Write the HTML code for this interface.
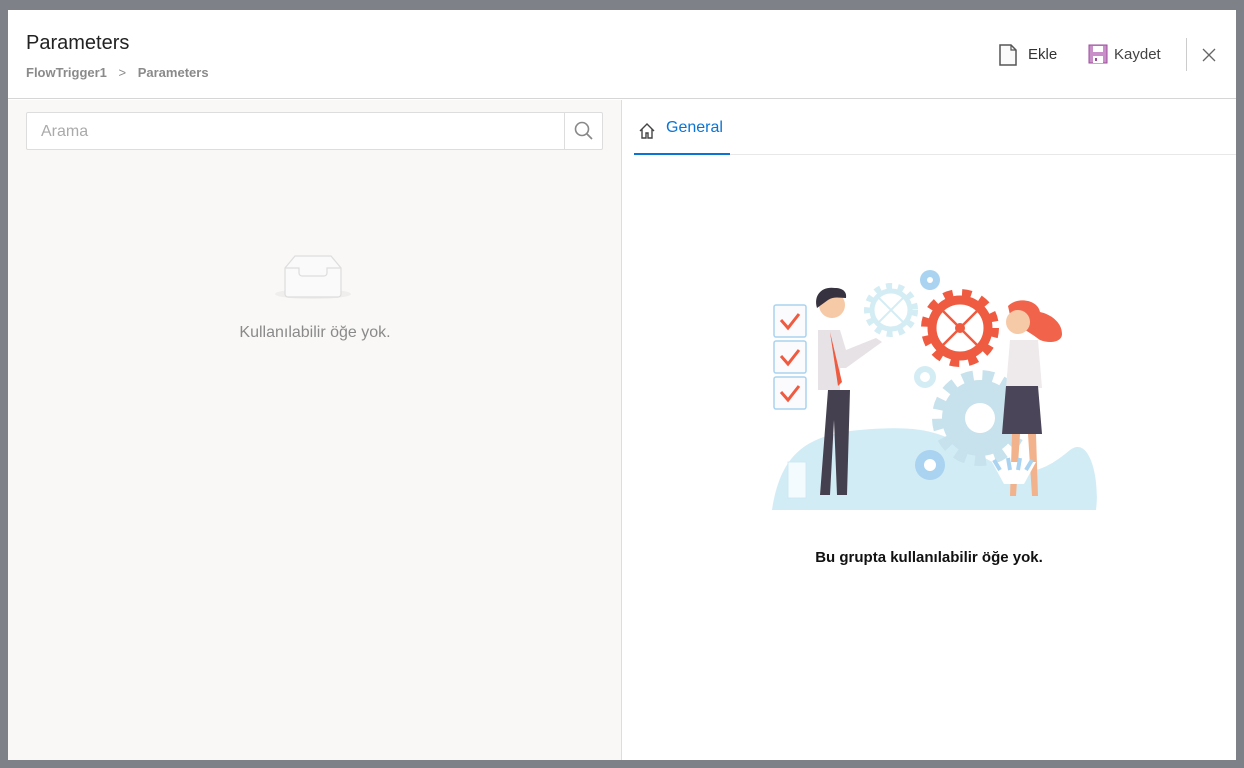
<!DOCTYPE html>
<html><head><meta charset="utf-8"><style>
*{box-sizing:border-box;margin:0;padding:0}
body{width:1244px;height:768px;background:#7e8288;font-family:"Liberation Sans",sans-serif;position:relative;overflow:hidden}
.modal{position:absolute;left:8px;top:10px;width:1228px;height:750px;background:#fff}
.hdr{position:absolute;left:0;top:0;width:1228px;height:89px;border-bottom:1px solid #d6d6d6}
.title{position:absolute;left:18px;top:22px;font-size:20px;color:#222}
.bc{position:absolute;left:18px;top:55px;font-size:13px;color:#8a8a8a;font-weight:bold}
.left{position:absolute;left:0;top:90px;width:614px;height:660px;background:#f9f8f6;border-right:1px solid #ddd}
.search{position:absolute;left:18px;top:12px;width:577px;height:38px;border:1px solid #ddd;background:#fff;border-radius:2px}
.search span{position:absolute;left:14px;top:10px;font-size:16px;color:#aaa}
.sbtn{position:absolute;right:0;top:0;width:38px;height:36px;border-left:1px solid #ddd}
.empty{position:absolute;left:0;width:614px;text-align:center;font-size:16px;color:#8a8a8a}
.tab{position:absolute;left:626px;top:100px;width:96px;height:45px}
.tabline{position:absolute;left:626px;top:144px;width:602px;height:1px;background:#e8e8e8}
.msg{position:absolute;left:614px;width:614px;top:539px;text-align:center;font-size:15px;font-weight:bold;color:#111}
</style></head><body>
<div class="modal">
 <div class="hdr">
  <div class="title">Parameters</div>
  <div class="bc">FlowTrigger1 <span style="font-weight:normal;margin:0 8px">&gt;</span> Parameters</div>
  <svg style="position:absolute;left:990px;top:34px" width="20" height="22"><path d="M2 1h11l5 5v15H2z" fill="#fafafa" stroke="#555" stroke-width="1.5"/><path d="M13 1v5h5" fill="none" stroke="#555" stroke-width="1.2"/></svg>
  <div style="position:absolute;left:1020px;top:36px;font-size:15px;color:#333">Ekle</div>
  <svg style="position:absolute;left:1080px;top:34px" width="20" height="20"><rect x="1" y="1" width="18" height="18" fill="#c98fc8" stroke="#9a4d98"/><rect x="5" y="2" width="10" height="6" fill="#fff"/><rect x="5" y="12" width="10" height="7" fill="#fff"/><rect x="7" y="14" width="2" height="3" fill="#9a4d98"/></svg>
  <div style="position:absolute;left:1106px;top:36px;font-size:15px;color:#444">Kaydet</div>
  <div style="position:absolute;left:1178px;top:28px;width:1px;height:33px;background:#ccc"></div>
  <svg style="position:absolute;left:1194px;top:38px" width="14" height="14"><path d="M1 1L13 13M13 1L1 13" stroke="#666" stroke-width="1.3"/></svg>
 </div>
 <div class="left">
  <div class="search"><span>Arama</span><div class="sbtn"><svg width="38" height="36"><circle cx="17" cy="16" r="6.5" fill="none" stroke="#888" stroke-width="1.6"/><path d="M22 21l5 5" stroke="#888" stroke-width="1.7"/></svg></div></div>
  <svg style="position:absolute;left:265px;top:152px" width="80" height="48"><ellipse cx="40" cy="42" rx="38" ry="5" fill="#f0eeec"/><path d="M12 16L22 4h36l10 12v26a3 3 0 0 1-3 3H15a3 3 0 0 1-3-3z" fill="#fafafa" stroke="#ddd" stroke-width="1.2"/><path d="M12 16h14v5a3 3 0 0 0 3 3h22a3 3 0 0 0 3-3v-5h14" fill="none" stroke="#ddd" stroke-width="1.2"/></svg>
  <div class="empty" style="top:224px">Kullanılabilir öğe yok.</div>
 </div>
 <div class="tabline"></div>
 <div style="position:absolute;left:626px;top:143px;width:96px;height:2px;background:#0a74d4"></div>
 <div class="tab"><svg style="position:absolute;left:4px;top:12px" width="18" height="18"><path d="M2 9L9 2l7 7M4 7v9h4v-5h2v5h4V7" fill="none" stroke="#444" stroke-width="1.4"/></svg><span style="position:absolute;left:32px;top:9px;font-size:16px;color:#0a74d4">General</span></div>
 <svg style="position:absolute;left:752px;top:250px" width="350" height="260">
  <path d="M12 250C20 200 40 175 100 170C160 165 180 170 220 195C260 220 280 215 310 190C330 175 340 220 336 250z" fill="#d2ecf6"/>
  <g fill="none" stroke="#a9d3f0" stroke-width="1.5"><rect x="14" y="45" width="32" height="32" rx="2" fill="#fbfbfd"/><rect x="14" y="81" width="32" height="32" rx="2" fill="#fbfbfd"/><rect x="14" y="117" width="32" height="32" rx="2" fill="#fbfbfd"/></g>
  <g fill="none" stroke="#ef5b40" stroke-width="3"><path d="M21 60l7 8 11-14"/><path d="M21 96l7 8 11-14"/><path d="M21 132l7 8 11-14"/></g>
  <path d="M28 238v-36h18v36z" fill="#f3fbfe" stroke="#cfe8f4"/>
  <circle cx="220" cy="158" r="42" fill="none" stroke="#c7e2ec" stroke-width="12" stroke-dasharray="11 9"/><circle cx="220" cy="158" r="38" fill="#c7e2ec"/><circle cx="220" cy="158" r="15" fill="#fff"/>
  <circle cx="200" cy="68" r="34" fill="none" stroke="#ef5b40" stroke-width="10" stroke-dasharray="9 9"/><circle cx="200" cy="68" r="28" fill="none" stroke="#ef5b40" stroke-width="9"/><path d="M182 50l36 36M218 50l-36 36" stroke="#ef5b40" stroke-width="2.5"/><circle cx="200" cy="68" r="5" fill="#ef5b40"/>
  <circle cx="131" cy="50" r="24" fill="none" stroke="#d4ecf4" stroke-width="6" stroke-dasharray="6 6"/><circle cx="131" cy="50" r="19" fill="none" stroke="#d4ecf4" stroke-width="5"/><path d="M118 37l26 26M144 37l-26 26" stroke="#d4ecf4" stroke-width="2"/>
  <circle cx="170" cy="20" r="10" fill="#a9d3f0"/><circle cx="170" cy="20" r="3" fill="#fff"/>
  <circle cx="165" cy="117" r="11" fill="#d4ecf4"/><circle cx="165" cy="117" r="5" fill="#fff"/>
  <circle cx="170" cy="205" r="15" fill="#a9d3f0"/><circle cx="170" cy="205" r="6" fill="#fff"/>
  <path d="M68 130h22l-3 105h-10l-3-75-4 75h-10z" fill="#45404f"/>
  <path d="M58 70h22l6 20 30-12 6 4-36 26h-6v22H58z" fill="#e7e2e6"/>
  <path d="M70 72l12 50-4 4z" fill="#ef5b40"/>
  <circle cx="72" cy="45" r="13" fill="#f6c9a7"/><path d="M57 48c-4-14 6-22 18-20 8 0 12 4 11 10-6 0-12-2-18 2z" fill="#37323f"/>
  <path d="M248 46c10-10 30-6 32 6 10 2 22 10 22 22 0 8-12 10-22 6-8-6-20-14-28-16z" fill="#f1634a"/>
  <circle cx="258" cy="62" r="12" fill="#f6c9a7"/>
  <path d="M250 80h28l4 48h-36z" fill="#eeeaec"/><path d="M246 126h32l4 48h-40z" fill="#4a4558"/>
  <path d="M252 174h8l-4 62h-6zM268 174h8l2 62h-6z" fill="#f2b28c"/>
  <path d="M232 202l12 22h20l12-22z" fill="#fff"/><path d="M240 210l-6-10M250 210l-2-12M258 210l2-12M266 210l6-10" stroke="#a9d3f0" stroke-width="4"/>
 </svg>
 <div class="msg">Bu grupta kullanılabilir öğe yok.</div>
</div>
</body></html>
